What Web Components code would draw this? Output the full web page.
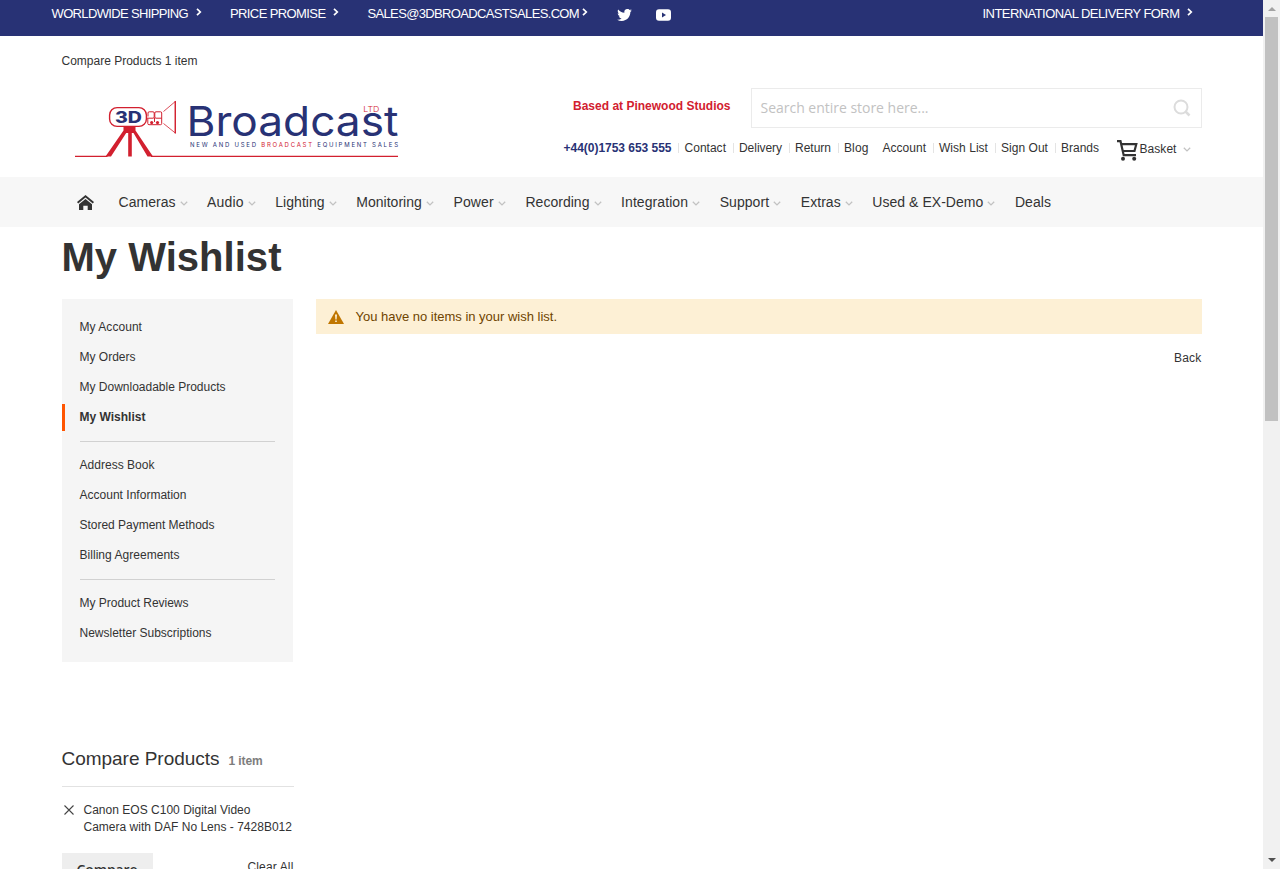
<!DOCTYPE html>
<html lang="en"><head><meta charset="utf-8"><title>My Wishlist</title>
<style>
html,body{margin:0;height:869px;overflow:hidden;background:#fff}
body{font:12px/16px "Liberation Sans",Arial,sans-serif;color:#333}
</style></head><body><wishlist-page></wishlist-page>
<script>
function define(name, html, ready) {
  const tpl = document.createElement('template');
  tpl.innerHTML = html;
  customElements.define(name, class extends HTMLElement {
    connectedCallback() {
      if (this.shadowRoot) return;
      this.attachShadow({mode: 'open'}).append(tpl.content.cloneNode(true));
      if (ready) ready(this, this.shadowRoot);
    }
  });
}

// One-line label whose tracking is adjusted to the width given in "w".
define('fit-text', `<style>:host{display:block;white-space:nowrap;flex:none}span{display:inline-block;margin-left:-.5px}</style><span><slot></slot></span>`, (el, root) => {
  const w = +el.getAttribute('w');
  if (!w) return;
  const s = root.querySelector('span');
  s.style.letterSpacing = (w - s.getBoundingClientRect().width) / el.textContent.length + 'px';
  el.style.width = w + 'px';
});

define('chevron-down', `<style>:host{display:block;flex:none;width:8px;height:5px}svg{display:block}</style>
<svg width="8" height="5" viewBox="0 0 8 5"><path d="M.8.8 4 3.9 7.2.8" fill="none" stroke="#c2c2c2" stroke-width="1.3"/></svg>`);
define('chevron-right', `<style>:host{display:block;flex:none;width:6px;height:8px}svg{display:block}</style>
<svg width="6" height="8" viewBox="0 0 6 8"><path d="M1 .8 4.3 4 1 7.2" fill="none" stroke="#fff" stroke-width="1.7"/></svg>`);

define('top-bar', `<style>
:host{display:flex;height:36px;box-sizing:border-box;background:#283275;color:#fff;padding:5px 70px 0 52px;font-size:13px;line-height:17px;align-items:flex-start}
chevron-right{margin-top:3px}svg{display:block;flex:none}
</style>
<fit-text w="136.500">WORLDWIDE SHIPPING</fit-text><chevron-right style="margin-left:7.500px"></chevron-right>
<fit-text w="95.500" style="margin-left:28.500px">PRICE PROMISE</fit-text><chevron-right style="margin-left:7px"></chevron-right>
<fit-text w="211.500" style="margin-left:29px">SALES@3DBROADCASTSALES.COM</fit-text><chevron-right style="margin-left:2.500px"></chevron-right>
<svg style="margin:4px 0 0 29px" width="15" height="12" viewBox="0 0 24 19.5"><path fill="#fff" d="M24 2.3c-.9.4-1.8.7-2.8.8 1-.6 1.800-1.600 2.200-2.700-1 .6-2 1-3.100 1.200A4.900 4.900 0 0 0 11.900 6.100C7.700 5.900 4.100 3.900 1.700.9.400 3.100 1 6 3.200 7.500c-.8 0-1.600-.2-2.200-.6 0 2.300 1.600 4.400 3.900 4.900-.7.200-1.500.2-2.200.1.600 2 2.400 3.400 4.600 3.400A9.900 9.900 0 0 1 0 17.300 14 14 0 0 0 7.500 19.500c9.100 0 14.300-7.700 14-14.600 1-.7 1.800-1.600 2.500-2.600z"/></svg>
<svg style="margin:4px 0 0 24px" width="15" height="12" viewBox="0 0 15 12"><rect width="15" height="11.500" y=".2" rx="3" fill="#fff"/><path d="M6 3.500v5l4-2.500z" fill="#283275"/></svg>
<fit-text w="197" style="margin-left:auto">INTERNATIONAL DELIVERY FORM</fit-text><chevron-right style="margin-left:7px"></chevron-right>`);

define('brand-logo', `<style>:host{display:block;width:326px;height:62px}svg{display:block}</style>
<svg width="326" height="62" viewBox="74 98 326 62">
<g fill="none" stroke="#d2202f">
<path d="M75 156.400H107.500M151 156.400H398" stroke-width="1.400"/>
<rect x="109.600" y="107.600" width="36.800" height="18.800" rx="7.500" stroke-width="1.400"/>
<path d="M148 116.500v-3.500q0-1.200 1.200-1.200H153q1.200 0 1.200 1.200v4q0 1.200-1.200 1.200h-6.500M161.700 118.200H156q-1.200 0-1.200-1.200v-4q0-1.200 1.200-1.200h4.500q1.200 0 1.200 1.200v10.500q0 1.200-1.200 1.200H149q-1.200 0-1.200-1.200v-5M154.500 118v4" stroke-width="1"/>
<path d="M163.500 111.500 175.300 101.500V133L163.500 123.500" stroke-width=".8"/><path d="M175.300 101V133.500" stroke-width="1.300"/>
</g>
<g fill="#d2202f"><circle cx="151.700" cy="122.600" r="1.600"/><circle cx="157.500" cy="122.600" r="1.600"/><path d="M123.500 126.500h12v4l17.500 26h-5.500L133.500 133h-1.700v23.500h-3.600V133h-2L111 156.500h-5.500l18-26z"/></g>
<text x="115" y="122.700" textLength="27" lengthAdjust="spacingAndGlyphs" font-family="Inter,sans-serif" font-weight="800" font-size="16" fill="#283275">3D</text>
<text x="186.500" y="136" textLength="212" lengthAdjust="spacingAndGlyphs" font-family="Inter,sans-serif" font-size="41" fill="#283275">Broadcast</text>
<text x="363.300" y="112" textLength="16" lengthAdjust="spacingAndGlyphs" font-family="Inter,sans-serif" font-size="8" font-weight="300" fill="#d2202f">LTD</text>
<text x="190" y="146.500" textLength="208" lengthAdjust="spacing" font-family="Inter,sans-serif" font-size="6" fill="#283275">NEW AND USED <tspan fill="#d2202f">BROADCAST</tspan> EQUIPMENT SALES</text>
</svg>`);

define('search-box', `<style>
:host{display:flex;box-sizing:border-box;width:451px;height:40px;border:1px solid #ebebeb;align-items:center;padding:0 10px 0 9px;justify-content:space-between;font:14px/20px "Open Sans",sans-serif;color:#c2c2c2}
svg{display:block}</style>
<fit-text w="168">Search entire store here...</fit-text>
<svg width="18" height="18" viewBox="0 0 18 18" fill="none" stroke="#dcdcdc"><circle cx="8" cy="8" r="6.500" stroke-width="2"/><path d="m12.500 12.500 4 4" stroke-width="2.500"/></svg>`);

define('quick-links', `<style>
:host{display:flex;align-items:flex-start;height:22px}
i{width:1px;height:10px;background:#e4e4e4;margin:3px 0 0 6px;flex:none}
i+fit-text{margin-left:6px}svg{display:block;flex:none;margin-left:17.500px}
</style>
<fit-text w="108" style="font-weight:bold;color:#283275">+44(0)1753 653 555</fit-text><i></i>
<fit-text w="41.500">Contact</fit-text><i></i><fit-text w="43">Delivery</fit-text><i></i><fit-text w="36">Return</fit-text><i></i><fit-text w="24.500">Blog</fit-text>
<fit-text w="43.500" style="margin-left:14px">Account</fit-text><i></i><fit-text w="49">Wish List</fit-text><i></i><fit-text w="47">Sign Out</fit-text><i></i><fit-text w="38">Brands</fit-text>
<svg width="21" height="21" viewBox="0 0 21 21" fill="none" stroke="#333"><path d="M0 1.200h3.500l3.200 14H19" stroke-width="2.200"/><path d="M4.500 4.200H19.300L17.500 11H6" stroke-width="2.200"/><g fill="#333" stroke="none"><circle cx="6" cy="18.700" r="2"/><circle cx="17.200" cy="18.700" r="2"/></g></svg>
<fit-text w="37" style="margin:1px 0 0 2px">Basket</fit-text><chevron-down style="margin:7px 0 0 6px"></chevron-down>`);

define('nav-item', `<style>:host{display:flex;align-items:center;font-size:14px;line-height:18px;margin-right:20px;gap:3.600px}chevron-down{margin-top:2px}:host([plain]) chevron-down{display:none}</style>
<fit-text></fit-text><chevron-down></chevron-down>`, (el, root) => {
  const label = document.createElement('fit-text');
  label.setAttribute('w', el.getAttribute('w'));
  label.textContent = el.getAttribute('label');
  root.querySelector('fit-text').replaceWith(label);
});

define('main-nav', `<style>:host{display:flex;align-items:center;height:50px;box-sizing:border-box;background:#f7f7f7;padding-left:77px}svg{display:block;flex:none;margin:1px 25px 0 0}</style>
<svg width="17" height="15" viewBox="0 0 17 15" fill="#333"><path d="M8.500 0 17 7l-1.200 1.400L8.500 2.500 1.200 8.400 0 7z"/><path d="M8.500 3.900 15 9.200V15h-4.300v-4.300H6.300V15H2V9.200z"/></svg>
<nav-item label="Cameras" w="57"></nav-item><nav-item label="Audio" w="36.500"></nav-item><nav-item label="Lighting" w="49.500"></nav-item><nav-item label="Monitoring" w="65.500"></nav-item><nav-item label="Power" w="40.500"></nav-item><nav-item label="Recording" w="64"></nav-item><nav-item label="Integration" w="67"></nav-item><nav-item label="Support" w="49.500"></nav-item><nav-item label="Extras" w="40"></nav-item><nav-item label="Used &amp; EX-Demo" w="111"></nav-item><nav-item plain label="Deals" w="36"></nav-item>`);

define('account-menu', `<style>
:host{display:block;box-sizing:border-box;width:231px;height:363px;background:#f5f5f5;padding:15px 0}
fit-text{box-sizing:content-box;height:22px;padding:5px 0 0 15px;border-left:3px solid transparent;margin-bottom:3px}
.on{border-color:#ff5501;font-weight:bold}hr{margin:10px 18px;border:0;height:1px;background:#d1d1d1}
</style>
<fit-text w="62.500">My Account</fit-text><fit-text w="56">My Orders</fit-text><fit-text w="146">My Downloadable Products</fit-text><fit-text class="on" w="66">My Wishlist</fit-text><hr>
<fit-text w="75">Address Book</fit-text><fit-text w="107">Account Information</fit-text><fit-text w="135">Stored Payment Methods</fit-text><fit-text w="100">Billing Agreements</fit-text><hr>
<fit-text w="109">My Product Reviews</fit-text><fit-text w="132">Newsletter Subscriptions</fit-text>`);

define('notice-message', `<style>:host{display:flex;height:35px;box-sizing:border-box;background:#fdf0d5;color:#6f4400;padding-left:12px;align-items:center;font-size:13px}svg{display:block;margin:1px 12px 0 0}</style>
<svg width="16" height="14" viewBox="0 0 16 14"><path d="M8 0 16 14H0z" fill="#c07600"/><path d="M7 4.500h2L8.600 9.500H7.400zM7.200 10.500h1.600V12H7.200z" fill="#fdf0d5"/></svg>
<fit-text w="201.500">You have no items in your wish list.</fit-text>`);

define('compare-block', `<style>
:host{display:block;width:232px}
.head{display:flex;align-items:baseline;gap:9px;height:39px;border-bottom:1px solid #e2e2e2}
.head b{color:#7d7d7d}.title{font-size:19px;line-height:24px}
.item{display:flex;padding-top:15px;line-height:17px}
svg{display:block;margin:3px 10.500px 0 1.500px;flex:none}
.row{display:flex;justify-content:space-between;margin-top:17px}
.btn{width:91px;height:32px;box-sizing:border-box;background:#eee;padding:7px 0 0 15px;font:600 14px/20px "Open Sans",sans-serif}
</style>
<div class="head"><fit-text class="title" w="158">Compare Products</fit-text><b><fit-text w="34">1 item</fit-text></b></div>
<div class="item"><svg width="10" height="10" viewBox="0 0 10 10"><path d="m.5.500 9 9m0-9-9 9" stroke="#444" stroke-width="1.100"/></svg><div><fit-text w="167">Canon EOS C100 Digital Video</fit-text><fit-text w="208.500">Camera with DAF No Lens - 7428B012</fit-text></div></div>
<div class="row"><div class="btn"><fit-text w="61">Compare</fit-text></div><fit-text w="46" style="margin-top:6px">Clear All</fit-text></div>`);

define('page-scrollbar', `<style>:host{display:flex;flex-direction:column;align-items:center;width:17px;height:869px;background:#f1f1f1}
i{width:0;border:4px solid transparent;border-top-width:0;border-bottom-color:#a3a3a3;margin:7px 0 6px}
b{width:13px;height:404px;background:#c1c1c1}
i.d{border-top:4px solid #505050;border-bottom:0;margin:auto 0 7px}</style><i></i><b></b><i class="d"></i>`);

define('wishlist-page', `<style>
:host{display:grid;grid-template-columns:1263px 17px;height:869px;overflow:hidden}
header{height:141px;box-sizing:border-box;padding:17px 61px 0 62px}
.cols{display:flex;justify-content:space-between}
brand-logo{margin:29px 0 0 12px}
.right{display:flex;flex-direction:column;align-items:flex-end;margin-top:19px}
.search{display:flex;gap:20px}.search>fit-text{color:#d2202f;font-weight:bold;margin-top:10px}
quick-links{margin:12px 11px 0 0}
main{padding:0 61px 0 62px}
h1{margin:0;font-size:40px;line-height:60px;height:72px}
.body{display:grid;grid-template-columns:231px 886px;gap:23px}
.back{display:flex;justify-content:flex-end;margin-top:16px}
compare-block{margin-top:85px}
</style>
<div><top-bar></top-bar>
<header><fit-text w="136">Compare Products 1 item</fit-text>
<div class="cols"><brand-logo></brand-logo><div class="right"><div class="search"><fit-text w="157.500">Based at Pinewood Studios</fit-text><search-box></search-box></div><quick-links></quick-links></div></div></header>
<main-nav></main-nav>
<main><h1><fit-text w="220">My Wishlist</fit-text></h1>
<div class="body"><account-menu></account-menu><div><notice-message></notice-message><div class="back"><fit-text w="27.500">Back</fit-text></div></div></div>
<compare-block></compare-block></main></div>
<page-scrollbar></page-scrollbar>`);
</script></body></html>
